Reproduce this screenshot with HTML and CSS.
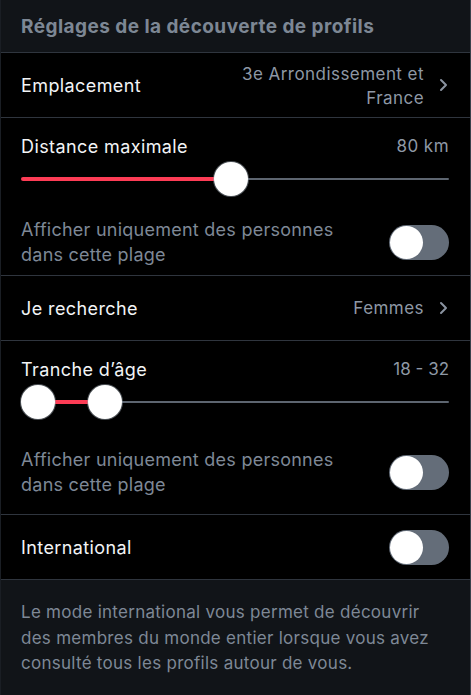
FILE: index.html
```html
<!DOCTYPE html>
<html lang="fr">
<head>
<meta charset="utf-8">
<link rel="stylesheet" href="styles.css">
</head>
<body>
<div class="panel">
  <div class="header">Réglages de la découverte de profils</div>
  <div class="row">
    <span class="label">Emplacement</span>
    <span class="value-wrap"><span class="value multi">3e Arrondissement et<br>France</span><svg class="chev" width="9" height="14" viewBox="0 0 9 14"><path d="M2 2 L7 7 L2 12" fill="none" stroke="#8a93a0" stroke-width="2" stroke-linecap="round" stroke-linejoin="round"/></svg></span>
  </div>
  <div class="section sec-distance">
    <div class="sec-top"><span class="label">Distance maximale</span><span class="value">80 km</span></div>
    <div class="slider">
      <div class="track"></div>
      <div class="fill" style="left:0;width:210px"></div>
      <div class="thumb" style="left:193px"></div>
    </div>
    <div class="toggle-row">
      <span class="sub">Afficher uniquement des personnes<br>dans cette plage</span>
      <span class="toggle"><span class="knob"></span></span>
    </div>
  </div>
  <div class="row">
    <span class="label">Je recherche</span>
    <span class="value-wrap"><span class="value">Femmes</span><svg class="chev" width="9" height="14" viewBox="0 0 9 14"><path d="M2 2 L7 7 L2 12" fill="none" stroke="#8a93a0" stroke-width="2" stroke-linecap="round" stroke-linejoin="round"/></svg></span>
  </div>
  <div class="section sec-age">
    <div class="sec-top"><span class="label">Tranche d’âge</span><span class="value tight">18 - 32</span></div>
    <div class="slider">
      <div class="track"></div>
      <div class="fill" style="left:17px;width:67px"></div>
      <div class="thumb" style="left:0"></div>
      <div class="thumb" style="left:67px"></div>
    </div>
    <div class="toggle-row">
      <span class="sub">Afficher uniquement des personnes<br>dans cette plage</span>
      <span class="toggle"><span class="knob"></span></span>
    </div>
  </div>
  <div class="row">
    <span class="label">International</span>
    <span class="toggle"><span class="knob"></span></span>
  </div>
  <div class="footer">Le mode international vous permet de découvrir des membres du monde entier lorsque vous avez consulté tous les profils autour de vous.</div>
</div>
</body>
</html>
```
FILE: styles.css
```css
* { box-sizing: border-box; }
html, body { margin: 0; padding: 0; }
body {
  background: #111418;
  font-family: "Inter", "Liberation Sans", sans-serif;
  color: #f2f4f6;
  width: 471px;
  height: 695px;
  overflow: hidden;
}
.panel {
  width: 471px;
  min-height: 695px;
  border-right: 1px solid #3a414b;
  border-left: 1px solid #1a1e24;
  background: #111418;
}
.header {
  height: 53px;
  padding: 0 20px;
  display: flex;
  align-items: center;
  font-size: 19px;
  font-weight: 700;
  color: #7d8794;
  border-bottom: 1px solid #2f353e;
  letter-spacing: 0.45px;
  white-space: nowrap;
}
.row {
  background: #000;
  min-height: 65px;
  display: flex;
  align-items: center;
  justify-content: space-between;
  padding: 0 21px 0 20px;
  border-bottom: 1px solid #2f353e;
}
.label {
  font-size: 18px;
  letter-spacing: 0.4px;
  color: #f2f4f6;
}
.value-wrap {
  display: flex;
  align-items: center;
  gap: 15px;
}
.value {
  font-size: 17px;
  letter-spacing: 0.45px;
  color: #8e98a5;
  text-align: right;
}
.value.tight { letter-spacing: 0; }
.value.multi { line-height: 24px; margin-top: 1px; }
.chev { display: block; margin-right: 1px; }
.section {
  background: #000;
  padding: 16px 21px 0 20px;
  border-bottom: 1px solid #2f353e;
}
.sec-top {
  display: flex;
  justify-content: space-between;
  align-items: center;
  height: 24px;
}
.slider {
  position: relative;
  height: 34px;
  margin-top: 4px;
}
.track {
  position: absolute;
  left: 1px;
  right: 0;
  top: 16px;
  height: 2px;
  background: #5d6570;
  border-radius: 1px;
}
.fill {
  position: absolute;
  top: 15px;
  height: 4px;
  background: #fd3c55;
  border-radius: 2px;
}
.thumb {
  position: absolute;
  top: 0;
  width: 34px;
  height: 34px;
  border-radius: 50%;
  background: #fff;
  box-shadow: 0 0 0 1px rgba(150,160,170,0.5);
}
.toggle-row {
  display: flex;
  align-items: center;
  justify-content: space-between;
}
.sec-distance .toggle-row { margin-top: 21px; padding-bottom: 8px; }
.sec-age .toggle-row { margin-top: 28px; padding-bottom: 17px; }
.sub {
  font-size: 18px;
  letter-spacing: 0.25px;
  line-height: 25px;
  color: #7e8896;
  white-space: nowrap;
}
.toggle {
  width: 60px;
  height: 35px;
  border-radius: 18px;
  background: #646d79;
  padding: 1px;
  display: flex;
  align-items: center;
  flex: none;
}
.knob {
  width: 33px;
  height: 33px;
  border-radius: 50%;
  background: #fff;
}
.footer {
  padding: 20px 30px 0 20px;
  font-size: 17px;
  letter-spacing: 0.27px;
  line-height: 25.5px;
  color: #7e8896;
}
```
